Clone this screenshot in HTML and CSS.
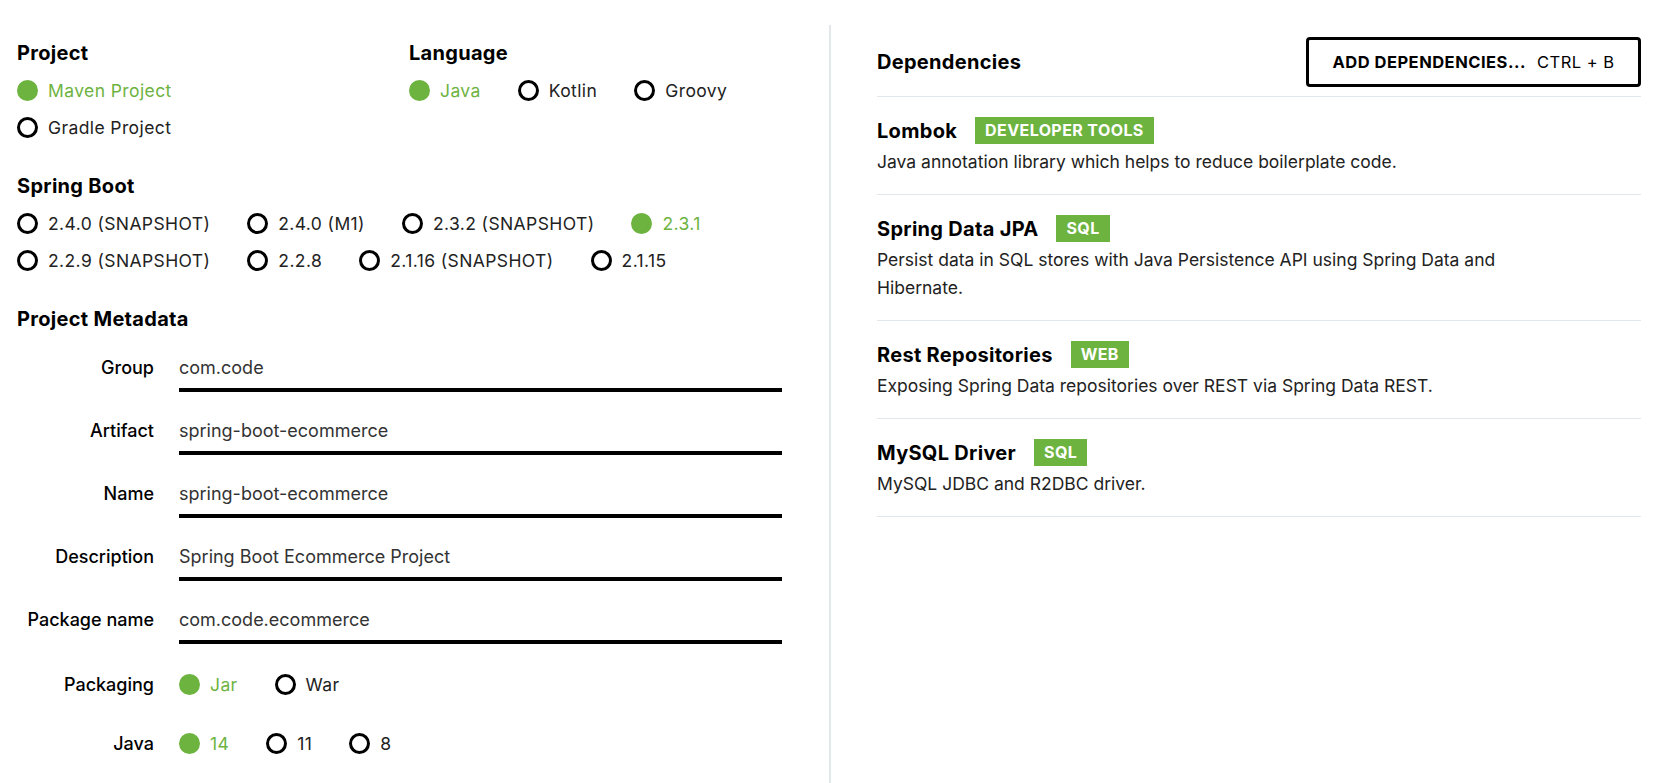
FILE: index.html
```html
<!DOCTYPE html>
<html lang="en">
<head>
<meta charset="utf-8">
<title>Spring Initializr</title>
<link rel="stylesheet" href="styles.css">
</head>
<body>
<div class="page">
  <div class="left">
    <div class="top-row">
      <section class="group">
        <h2 class="heading">Project</h2>
        <div class="radio-row"><span class="radio radio-on"><span class="dot"></span>Maven Project</span></div>
        <div class="radio-row"><span class="radio"><span class="dot"></span>Gradle Project</span></div>
      </section>
      <section class="group">
        <h2 class="heading">Language</h2>
        <div class="radio-row">
          <span class="radio radio-on"><span class="dot"></span>Java</span>
          <span class="radio"><span class="dot"></span>Kotlin</span>
          <span class="radio"><span class="dot"></span>Groovy</span>
        </div>
      </section>
    </div>

    <section class="group section">
      <h2 class="heading">Spring Boot</h2>
      <div class="radio-row">
        <span class="radio"><span class="dot"></span>2.4.0 (SNAPSHOT)</span>
        <span class="radio"><span class="dot"></span>2.4.0 (M1)</span>
        <span class="radio"><span class="dot"></span>2.3.2 (SNAPSHOT)</span>
        <span class="radio radio-on"><span class="dot"></span>2.3.1</span>
      </div>
      <div class="radio-row">
        <span class="radio"><span class="dot"></span>2.2.9 (SNAPSHOT)</span>
        <span class="radio"><span class="dot"></span>2.2.8</span>
        <span class="radio"><span class="dot"></span>2.1.16 (SNAPSHOT)</span>
        <span class="radio"><span class="dot"></span>2.1.15</span>
      </div>
    </section>

    <section class="group section">
      <h2 class="heading">Project Metadata</h2>
      <div class="form">
        <div class="field">
          <label class="label">Group</label>
          <div class="input">com.code</div>
        </div>
        <div class="field">
          <label class="label">Artifact</label>
          <div class="input">spring-boot-ecommerce</div>
        </div>
        <div class="field">
          <label class="label">Name</label>
          <div class="input">spring-boot-ecommerce</div>
        </div>
        <div class="field">
          <label class="label">Description</label>
          <div class="input">Spring Boot Ecommerce Project</div>
        </div>
        <div class="field">
          <label class="label">Package name</label>
          <div class="input">com.code.ecommerce</div>
        </div>
        <div class="field field-radio">
          <label class="label">Packaging</label>
          <div class="radio-row">
            <span class="radio radio-on"><span class="dot"></span>Jar</span>
            <span class="radio"><span class="dot"></span>War</span>
          </div>
        </div>
        <div class="field field-radio">
          <label class="label">Java</label>
          <div class="radio-row">
            <span class="radio radio-on"><span class="dot"></span>14</span>
            <span class="radio"><span class="dot"></span>11</span>
            <span class="radio"><span class="dot"></span>8</span>
          </div>
        </div>
      </div>
    </section>
  </div>

  <div class="right">
    <div class="dep-header">
      <h2 class="heading">Dependencies</h2>
      <button class="add-btn"><strong>ADD DEPENDENCIES...</strong><span class="shortcut">CTRL + B</span></button>
    </div>
    <ul class="dep-list">
      <li class="dep">
        <div class="dep-title"><span class="dep-name">Lombok</span><span class="badge">DEVELOPER TOOLS</span></div>
        <p class="dep-desc">Java annotation library which helps to reduce boilerplate code.</p>
      </li>
      <li class="dep">
        <div class="dep-title"><span class="dep-name">Spring Data JPA</span><span class="badge">SQL</span></div>
        <p class="dep-desc">Persist data in SQL stores with Java Persistence API using Spring Data and Hibernate.</p>
      </li>
      <li class="dep">
        <div class="dep-title"><span class="dep-name">Rest Repositories</span><span class="badge">WEB</span></div>
        <p class="dep-desc">Exposing Spring Data repositories over REST via Spring Data REST.</p>
      </li>
      <li class="dep">
        <div class="dep-title"><span class="dep-name">MySQL Driver</span><span class="badge">SQL</span></div>
        <p class="dep-desc">MySQL JDBC and R2DBC driver.</p>
      </li>
    </ul>
  </div>
</div>
</body>
</html>
```

FILE: styles.css
```css
* { box-sizing: border-box; }

html, body {
  margin: 0;
  padding: 0;
  background: #fff;
}

body {
  font-family: Inter, "Noto Sans", sans-serif;
  color: #222;
}

.page {
  display: flex;
  padding-top: 25px;
  min-height: 783px;
}

.left {
  width: 831px;
  flex: none;
  padding: 16px 47px 0 17px;
  border-right: 2px solid #e1e8eb;
}

.right {
  flex: 1;
  padding: 12px 16px 0 46px;
}

.heading {
  margin: 0;
  font-size: 20px;
  line-height: 24px;
  font-weight: 700;
  letter-spacing: 0.3px;
  color: #000;
}

.top-row {
  display: grid;
  grid-template-columns: 392px 1fr;
}

.group .heading + .radio-row {
  margin-top: 7px;
}

.section {
  margin-top: 28px;
}

.radio-row {
  display: flex;
  align-items: center;
  height: 37px;
  gap: 37px;
}

.radio {
  display: inline-flex;
  align-items: center;
  gap: 10px;
  font-size: 17.5px;
  letter-spacing: 0.4px;
  color: #222;
  white-space: nowrap;
}

.dot {
  width: 21px;
  height: 21px;
  border: 3px solid #000;
  border-radius: 50%;
  flex: none;
}

.radio-on {
  color: #6db33f;
}

.radio-on .dot {
  border-color: #6db33f;
  background: #6db33f;
}

.form {
  margin-top: 25px;
  display: flex;
  flex-direction: column;
  gap: 27px;
}

.field {
  display: grid;
  grid-template-columns: 137px 1fr;
  column-gap: 25px;
  align-items: start;
}

.field-radio {
  margin-top: -5px;
  align-items: center;
}

.field-radio + .field-radio {
  margin-top: -5px;
}

.label {
  text-align: right;
  font-size: 18px;
  line-height: 24px;
  font-weight: 500;
  color: #000;
}

.input {
  font-size: 18px;
  line-height: 24px;
  padding-bottom: 8px;
  border-bottom: 4px solid #000;
  color: #333;
}

.dep-header {
  display: flex;
  align-items: center;
  justify-content: space-between;
  padding-bottom: 9px;
  border-bottom: 1px solid #e1e8eb;
}

.add-btn {
  height: 50px;
  width: 335px;
  border: 3px solid #000;
  border-radius: 4px;
  background: #fff;
  font-family: inherit;
  font-size: 16.5px;
  letter-spacing: 0.5px;
  color: #000;
  display: flex;
  align-items: center;
  justify-content: center;
  gap: 11px;
  padding: 0;
}

.add-btn strong {
  font-weight: 700;
}

.shortcut {
  font-weight: 400;
}

.dep-list {
  list-style: none;
  margin: 0;
  padding: 0;
}

.dep {
  padding: 20px 0 18px;
  border-bottom: 1px solid #e1e8eb;
}

.dep-title {
  display: flex;
  align-items: center;
  height: 27px;
  gap: 18px;
}

.dep-name {
  font-size: 20px;
  font-weight: 700;
  letter-spacing: 0.3px;
  color: #000;
}

.badge {
  background: #6db33f;
  color: #fff;
  font-size: 16px;
  font-weight: 700;
  letter-spacing: 0.4px;
  height: 27px;
  line-height: 27px;
  padding: 0 10px;
}

.dep-desc {
  margin: 4px 0 0;
  font-size: 17.5px;
  line-height: 28px;
  max-width: 650px;
  color: #222;
}
```
